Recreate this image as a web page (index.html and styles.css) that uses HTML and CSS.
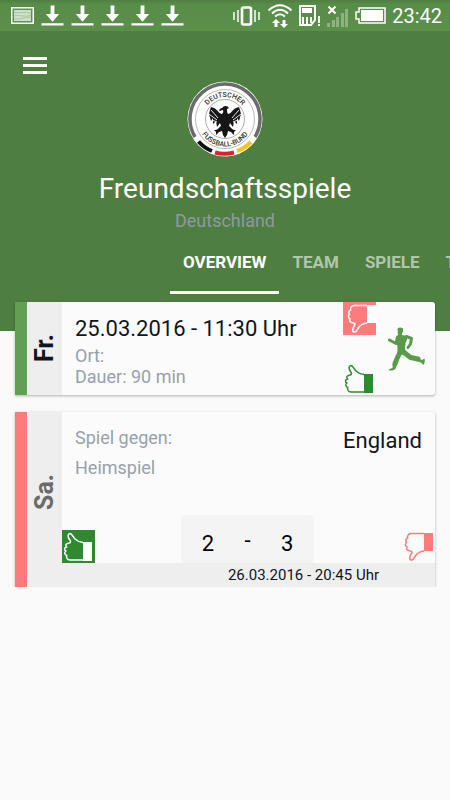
FILE: index.html
```html
<!DOCTYPE html>
<html lang="de">
<head>
	<meta charset="UTF-8">
	<meta name="viewport" content="width=device-width, initial-scale=1">
	<title>Freundschaftsspiele</title>
	<link rel="stylesheet" href="styles.css">
</head>
<body>
	<svg class="sprite" aria-hidden="true">
		<symbol id="download" viewBox="0 0 24 22">
			<path d="M10 0h4v9h5l-7 8-7-8h5z M.5 18.500h23v2.500H.5z"/>
		</symbol>
		<symbol id="thumb-up" viewBox="0 0 33 33">
			<path class="line" d="M21 12.500C17 12 15 11 13 9 11 7 10 3.500 8 3.500 5.500 4 5.500 6.500 7.500 9.500 9 11.500 9 12.500 7 13 4 13.500 3 15 4.500 17 2 17.500 2 20 3.800 21 2 22.500 2.800 25 4.700 25.500 4 28 5.500 29.800 8 30H21"/>
			<path class="cuff" d="M21 12h9v19h-9z"/>
		</symbol>
		<symbol id="thumb-down" viewBox="0 0 33 33">
			<path class="line" d="M24 21C20 21.500 18 22.500 16 25 14.500 27 14 30 11 30 9 29.500 9.500 26 11.500 23.500 12.500 22 12 21 10 21 7 20.500 6 19 7 17 5 16 5 13.500 6.500 12.500 5 10.500 5.800 8.500 7.700 8 7 5.500 8.500 3.800 11 3.500H24"/>
			<path class="cuff" d="M24 3h9v18h-9z"/>
		</symbol>
	</svg>

	<header class="header">
		<div class="statusbar">
			<div class="notes">
				<svg width="23" height="17" viewBox="0 0 23 17">
					<path fill="#fff" d="M0 0h23v17H0z"/>
					<path fill="#5f8f52" d="M1.500 1.500h20v14h-20z"/>
					<path fill="#cfe0ca" d="M3 3h17v11H3z"/>
					<path fill="none" stroke="#a9c6a0" d="M3 5c5 2 10-1 17 1M3 9c6-2 11 2 17-1M3 12c6 1 10-2 17-2"/>
				</svg>
				<svg class="download"><use href="#download"/></svg>
				<svg class="download"><use href="#download"/></svg>
				<svg class="download"><use href="#download"/></svg>
				<svg class="download"><use href="#download"/></svg>
				<svg class="download"><use href="#download"/></svg>
			</div>
			<div class="system">
				<!-- vibrate -->
				<svg width="28" height="24" viewBox="0 0 28 24" fill="none" stroke="#fff">
					<rect x="9" y="3.500" width="9" height="17" rx="1.500" stroke-width="2.600"/>
					<path stroke-width="1.500" d="M5 6v12M22 6v12M1 8v8M26 8v8"/>
				</svg>
				<!-- wifi -->
				<svg width="26" height="24" viewBox="0 0 26 24" fill="none" stroke="#fff" stroke-width="2">
					<path d="M1.500 6.500Q13-4 24.500 6.500M5 9.500Q13 2 21 9.500M8 12.500Q13 8 18 12.500"/>
					<path fill="#fff" stroke="none" d="M9 15l4 4h-2.500v4h-3v-4H5zM17 24l-4-4h2.500v-4h3v4H21z"/>
				</svg>
				<!-- sim card -->
				<svg width="22" height="23" viewBox="0 0 22 23">
					<path fill="none" stroke="#fff" stroke-width="2" d="M1 2h15v14l-4 5H1z"/>
					<path fill="#fff" d="M3 4h10v5H3zM3 13h2v7H3zM7 13h2v7H7zM11 13h2v6h-2zM19 12h2v7h-2zM19 20h2v2h-2z"/>
				</svg>
				<!-- signal -->
				<svg width="22" height="22" viewBox="0 0 22 22">
					<path stroke="#fff" stroke-width="2" d="M1.500 1.500l7 7M8.500 1.500l-7 7"/>
					<path fill="#8db381" d="M0 18h3v4H0zM5 15h3v7H5zM9 12h3v10H9zM14 8h3v14h-3zM18 4h3v18h-3z"/>
				</svg>
				<!-- battery -->
				<svg width="31" height="17" viewBox="0 0 31 17">
					<path fill="none" stroke="#fff" stroke-width="1.500" d="M4 1h26v15H4v-4H1V5h3z"/>
					<path fill="#fff" d="M6 3h22v11H6z"/>
				</svg>
				<time class="clock">23:42</time>
			</div>
		</div>

		<button class="menu" aria-label="Menü">
			<svg width="24" height="18" viewBox="0 0 24 18"><path fill="#fff" d="M0 1h24v3H0zM0 8h24v3H0zM0 15h24v3H0z"/></svg>
		</button>

		<svg class="crest" viewBox="0 0 76 76">
			<defs>
				<path id="arc-top" d="M16 38a22 22 0 0 1 44 0"/>
				<path id="arc-bottom" d="M10.500 38a27.500 27.500 0 0 0 55 0"/>
			</defs>
			<circle cx="38" cy="38" r="37.500" fill="#fff"/>
			<path fill="none" stroke="#6b6a6e" stroke-width="3.500" d="M8 56A35 35 0 1 1 68 56"/>
			<path fill="none" stroke="#111" stroke-width="4" d="M11.500 60.500A35 35 0 0 0 25 70"/>
			<path fill="none" stroke="#d8232a" stroke-width="4" d="M28 71.500A35 35 0 0 0 47 71.500"/>
			<path fill="none" stroke="#f7c51e" stroke-width="4" d="M50 70A35 35 0 0 0 64 61"/>
			<circle cx="38" cy="38" r="29.500" fill="none" stroke="#999" stroke-width=".7"/>
			<circle cx="38" cy="38" r="19.500" fill="none" stroke="#888" stroke-width=".7"/>
			<text class="crest-text"><textPath href="#arc-top" startOffset="50%">DEUTSCHER</textPath></text>
			<text class="crest-text"><textPath href="#arc-bottom" startOffset="50%">FUSSBALL-BUND</textPath></text>
			<path fill="#161616" d="M36 26c2-2 5-1 6 1l-2 1c0 2 0 3 1 5 3 0 4-4 8-6l3-1 1 3 1 4-2 7-2-3 0 6-3-3-1 6-3-4-1 3c2 1 2 3 5 4l2 0-2 2 0 3-3-3-3-1-1 4-2 3-2-3-1-4-3 1-3 3 0-3-2-2 2 0c3-1 3-3 5-4l-1-3-3 4-1-6-3 3 0-6-2 3-2-7 1-4 1-3 3 1c4 2 5 6 8 6 2-2 1-3 1-4l-4 1c0-2 2-3 3-3z"/>
			<path fill="none" stroke="#fff" stroke-width=".9" d="M24 29l7 8M22 33l8 6M52 29l-7 8M54 33l-8 6M25 39l5 2M51 39l-5 2"/>
		</svg>
		<h1 class="title">Freundschaftsspiele</h1>
		<p class="country">Deutschland</p>

		<nav class="tabs">
			<a class="tab active" href="#overview">OVERVIEW</a>
			<a class="tab" href="#team">TEAM</a>
			<a class="tab" href="#spiele">SPIELE</a>
			<a class="tab" href="#tabelle">T</a>
		</nav>
	</header>

	<main class="cards" id="overview">
		<article class="card training">
			<div class="day">Fr.</div>
			<div class="info">
				<h2 class="headline">25.03.2016 - 11:30 Uhr</h2>
				<p class="meta">Ort:</p>
				<p class="meta">Dauer: 90 min</p>
			</div>
			<div class="votes">
				<button class="thumb no selected" aria-label="Absagen"><svg><use href="#thumb-down"/></svg></button>
				<button class="thumb yes" aria-label="Zusagen"><svg><use href="#thumb-up"/></svg></button>
			</div>
			<svg class="runner" viewBox="0 0 37 44">
				<path d="M9.500 1.500Q12-.5 15 1.500V4.500L14 6.500V8L19 9Q20 12 17.500 16L17 22 18.500 26Q14 29 9.500 26.500L9.500 20 8.500 15Q7 11 10 8Z"/>
				<path class="limb" d="M18.500 9.500L23.500 11.500 22.500 17 20 20.500M9.500 10L8 16.500 1.500 13"/>
				<path class="leg" d="M15.500 25L22.500 30.500 30 32M12 25.500L9 31.500 7 37"/>
				<path d="M28 30.500L34 33 36.500 31.500Q37.500 35 35.500 38L33 35.500 28 34ZM5 34L9 36 7.500 42 4.500 43.500H1Q.5 42 4.500 41Z"/>
			</svg>
		</article>

		<article class="card match">
			<div class="day">Sa.</div>
			<div class="game">
				<div class="teams">
					<div>
						<p class="meta">Spiel gegen:</p>
						<p class="meta">Heimspiel</p>
					</div>
					<h2 class="headline">England</h2>
				</div>
				<div class="result">
					<button class="thumb yes selected" aria-label="Zusagen"><svg><use href="#thumb-up"/></svg></button>
					<div class="score"><span>2</span><span class="dash">-</span><span>3</span></div>
					<button class="thumb no" aria-label="Absagen"><svg><use href="#thumb-down"/></svg></button>
				</div>
				<time class="date">26.03.2016 - 20:45 Uhr</time>
			</div>
		</article>
	</main>
</body>
</html>
```

FILE: styles.css
```css
* {
	box-sizing: border-box;
}
body {
	margin: 0;
	background: #fafafa;
	color: #11151c;
	font-family: Roboto, "Liberation Sans", sans-serif;
	overflow-x: hidden;
}
h1, h2, p {
	margin: 0;
	font-weight: 400;
}
button {
	padding: 0;
	border: none;
	background: none;
}
svg {
	display: block;
}
.sprite {
	display: none;
}

/* header */
.header {
	display: flex;
	flex-direction: column;
	align-items: center;
	padding-bottom: 37px;
	background: #4f7e41;
}
.statusbar {
	display: flex;
	align-self: stretch;
	align-items: center;
	justify-content: space-between;
	height: 31px;
	padding: 0 8px 0 11px;
	background: linear-gradient(#4f7e41, #588c49 4px, #5b904b);
}
.notes, .system {
	display: flex;
	align-items: center;
	gap: 7px;
}
.system {
	gap: 6px;
}
.download {
	width: 23px;
	height: 22px;
	fill: #fff;
}
.clock {
	color: #fff;
	font-size: 20px;
	line-height: 30px;
}
.menu {
	align-self: flex-start;
	margin: 25px 0 0 23px;
}
.crest {
	width: 76px;
	height: 76px;
	margin-top: 7px;
}
.crest-text {
	font-size: 7px;
	font-weight: 500;
	text-anchor: middle;
	fill: #333;
}
.title {
	margin-top: 15px;
	color: #fff;
	font-size: 28px;
	line-height: 34px;
}
.country {
	margin-top: 3px;
	color: #8d9aa3;
	font-size: 18px;
	line-height: 24px;
}
.tabs {
	display: flex;
	align-self: stretch;
	margin-top: 1px;
	padding-left: 170px;
	overflow: hidden;
}
.tab {
	flex: none;
	height: 60px;
	padding: 0 13px;
	border-bottom: 3px solid transparent;
	color: #b2c6ac;
	font-size: 17px;
	font-weight: 700;
	line-height: 56px;
	text-decoration: none;
}
.tab.active {
	border-color: #fff;
	color: #fff;
}

/* cards */
.cards {
	display: grid;
	gap: 17px;
	margin-top: -29px;
	padding: 0 15px;
}
.card {
	display: flex;
	border-left: 12px solid #629f53;
	border-radius: 0 3px 3px 0;
	background: #fbfbfb;
	box-shadow: 0 1px 3px rgba(0, 0, 0, .3);
}
.match {
	border-color: #ff7b7b;
}
.day {
	width: 35px;
	background: #eee;
	font-size: 25px;
	font-weight: 700;
	line-height: 35px;
	text-align: center;
	writing-mode: vertical-rl;
	transform: rotate(180deg);
}
.match .day {
	padding-top: 16px;
	color: #6a6a6a;
}
.info {
	flex: 1;
	padding: 11px 0 8px 13px;
}
.headline {
	font-size: 22px;
	line-height: 32px;
}
.meta {
	color: #97a1ac;
	font-size: 18px;
	line-height: 21px;
}
.votes {
	display: flex;
	flex-direction: column;
	justify-content: space-between;
}
.thumb svg {
	width: 33px;
	height: 33px;
}
.line {
	fill: none;
	stroke: currentColor;
	stroke-width: 1.5px;
}
.cuff {
	fill: currentColor;
}
.yes {
	color: #2f8a2f;
}
.no {
	color: #ff7b7b;
}
.selected {
	color: #fff;
}
.yes.selected {
	background: #2f8a2f;
}
.no.selected {
	background: #ff7b7b;
}
.runner {
	align-self: center;
	width: 37px;
	height: 44px;
	margin: 0 10px 0 12px;
	fill: #5a9a4b;
}
.limb, .leg {
	fill: none;
	stroke: #5a9a4b;
	stroke-width: 3px;
	stroke-linecap: round;
	stroke-linejoin: round;
}
.leg {
	stroke-width: 5px;
}

/* match */
.game {
	display: flex;
	flex: 1;
	flex-direction: column;
}
.teams {
	display: flex;
	justify-content: space-between;
	padding: 13px 13px 35px;
}
.teams .meta {
	line-height: 25px;
}
.teams .meta + .meta {
	margin-top: 5px;
}
.result {
	display: flex;
	align-items: flex-end;
	justify-content: space-between;
	padding-right: 2px;
}
.score {
	display: grid;
	grid-template-columns: 1fr 1fr 1fr;
	width: 133px;
	height: 48px;
	padding: 15px 7px 0;
	border-radius: 4px;
	background: #f4f4f4;
	color: #000;
	font-size: 22px;
	line-height: 28px;
	text-align: center;
}
.dash {
	line-height: 22px;
}
.date {
	padding-right: 56px;
	background: #eee;
	font-size: 15px;
	line-height: 24px;
	text-align: right;
}
```
